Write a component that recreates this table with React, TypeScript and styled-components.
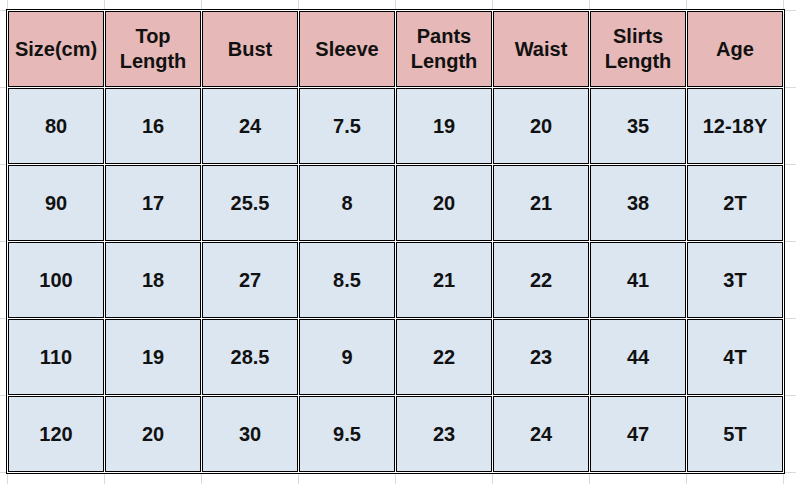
import React from "react";
import styled, { createGlobalStyle } from "styled-components";

const GlobalStyle = createGlobalStyle`
  html, body {
    margin: 0;
    padding: 0;
    height: 100%;
  }
  body {
    background-color: #ffffff;
    /* spreadsheet gridlines behind the chart */
    background-image:
      linear-gradient(to right, #dadada 1px, transparent 1px),
      linear-gradient(to bottom, #dadada 1px, transparent 1px);
    background-size: 97px 77px;
    background-position: 7px 10px;
    font-family: "Liberation Sans", Arial, sans-serif;
  }
`;

const Page = styled.div`
  padding: 9px 0 0 6px;
`;

const SizeTable = styled.table`
  border: 1px solid #000;
  border-collapse: separate;
  border-spacing: 1px;
  background: #fff;
`;

const Cell = styled.td<{ $head?: boolean }>`
  box-sizing: border-box;
  width: 96px;
  height: 76px;
  padding: 0;
  border: 1px solid #000;
  background: ${(p) => (p.$head ? "#e6b8b7" : "#dce6f1")};
  color: #111;
  font-size: 20px;
  font-weight: 700;
  line-height: 25px;
  text-align: center;
  vertical-align: middle;
`;

const headers = [
  ["Size(cm)"],
  ["Top", "Length"],
  ["Bust"],
  ["Sleeve"],
  ["Pants", "Length"],
  ["Waist"],
  ["Slirts", "Length"],
  ["Age"],
];

const rows = [
  ["80", "16", "24", "7.5", "19", "20", "35", "12-18Y"],
  ["90", "17", "25.5", "8", "20", "21", "38", "2T"],
  ["100", "18", "27", "8.5", "21", "22", "41", "3T"],
  ["110", "19", "28.5", "9", "22", "23", "44", "4T"],
  ["120", "20", "30", "9.5", "23", "24", "47", "5T"],
];

const App: React.FC = () => {
  return (
    <>
      <GlobalStyle />
      <Page>
        <SizeTable>
          <tbody>
            <tr>
              {headers.map((lines, i) => (
                <Cell as="th" $head key={i}>
                  {lines.map((l, j) => (
                    <React.Fragment key={j}>
                      {j > 0 && <br />}
                      {l}
                    </React.Fragment>
                  ))}
                </Cell>
              ))}
            </tr>
            {rows.map((row, r) => (
              <tr key={r}>
                {row.map((v, c) => (
                  <Cell key={c}>{v}</Cell>
                ))}
              </tr>
            ))}
          </tbody>
        </SizeTable>
      </Page>
    </>
  );
};

export default App;
